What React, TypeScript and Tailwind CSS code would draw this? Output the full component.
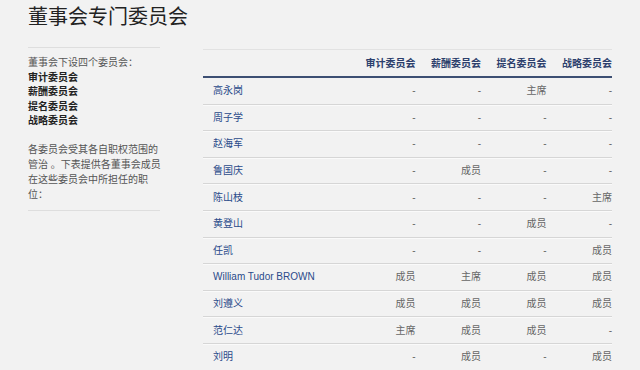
const rows: [string, string, string, string, string][] = [
  ['高永岗', '-', '-', '主席', '-'],
  ['周子学', '-', '-', '-', '-'],
  ['赵海军', '-', '-', '-', '-'],
  ['鲁国庆', '-', '成员', '-', '-'],
  ['陈山枝', '-', '-', '-', '主席'],
  ['黄登山', '-', '-', '成员', '-'],
  ['任凯', '-', '-', '-', '成员'],
  ['William Tudor BROWN', '成员', '主席', '成员', '成员'],
  ['刘遵义', '成员', '成员', '成员', '成员'],
  ['范仁达', '主席', '成员', '成员', '-'],
  ['刘明', '-', '成员', '-', '成员'],
]

const heads = ['审计委员会', '薪酬委员会', '提名委员会', '战略委员会']

export default function App() {
  return (
    <div
      className="w-[640px] h-[370px] overflow-hidden bg-[#f2f2f2] pl-[28px]"
      style={{ fontFamily: '"Liberation Sans", "Noto Sans CJK SC", sans-serif' }}
    >
      {/* Title */}
      <h1 className="h-[47px] pt-[4px] text-[20px] leading-[26px] text-[#222]">董事会专门委员会</h1>

      <div className="flex items-start">
        {/* Side note */}
        <div className="w-[132px] whitespace-nowrap border-y border-[#dedede] pt-[8px] pb-[8px] text-[10px] leading-[14.5px] text-[#555]">
          <p>董事会下设四个委员会：</p>
          <p className="font-bold text-[#222]">审计委员会</p>
          <p className="font-bold text-[#222]">薪酬委员会</p>
          <p className="font-bold text-[#222]">提名委员会</p>
          <p className="font-bold text-[#222]">战略委员会</p>
          <p className="mt-[13px] leading-[15px]">
            各委员会受其各自职权范围的
            <br />
            管治 。下表提供各董事会成员
            <br />
            在这些委员会中所担任的职
            <br />
            位：
          </p>
        </div>

        {/* Table */}
        <div className="ml-[43px] mt-[2px] w-[409px] border-t border-[#e2e2e2] text-[10px]">
          <div className="grid h-[28px] grid-cols-[147px_repeat(4,65.5px)] items-center border-b-2 border-[#3d4f73] font-bold text-[#2c3f6c]">
            <div />
            {heads.map((h) => (
              <div key={h} className="text-right">{h}</div>
            ))}
          </div>
          {rows.map(([name, ...vals]) => (
            <div
              key={name}
              className="grid h-[26.6px] grid-cols-[147px_repeat(4,65.5px)] items-center border-b border-[#d6d6d6] shadow-[0_1px_0_#fafafa]"
            >
              <div className="pl-[10px] text-[#2a4a8a]">{name}</div>
              {vals.map((v, i) => (
                <div key={i} className="text-right text-[#666]">{v}</div>
              ))}
            </div>
          ))}
        </div>
      </div>
    </div>
  )
}
